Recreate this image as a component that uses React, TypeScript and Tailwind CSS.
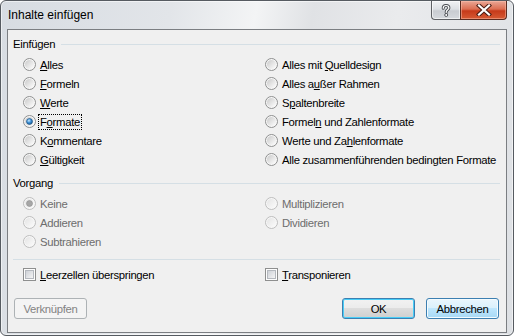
import React, { useId } from 'react';

// Windows 7 style "Inhalte einfügen" (Paste Special) dialog

const ui = "font-['Liberation_Sans',Arial,sans-serif]";

function Radio({ checked = false, disabled = false }: { checked?: boolean; disabled?: boolean }) {
  const id = useId().replace(/:/g, '');
  return (
    <svg width="13" height="13" viewBox="0 0 13 13" className="shrink-0">
      <defs>
        <linearGradient id={`f${id}`} x1="0" y1="0" x2="1" y2="1">
          <stop offset="0" stopColor={disabled ? '#e4e4e4' : '#c9c9c9'} />
          <stop offset="1" stopColor={disabled ? '#fbfbfb' : '#ffffff'} />
        </linearGradient>
        <radialGradient id={`d${id}`} cx="0.4" cy="0.35" r="0.75">
          <stop offset="0" stopColor="#c9e7fc" />
          <stop offset="0.45" stopColor="#3d92d8" />
          <stop offset="1" stopColor="#10497e" />
        </radialGradient>
      </defs>
      <circle cx="6.5" cy="6.5" r="6" fill="#f7f7f7" stroke={disabled ? '#bdbdbd' : '#8e8f8f'} />
      <circle cx="6.5" cy="6.5" r="4.6" fill={`url(#f${id})`} />
      {checked && (
        <circle cx="6.5" cy="6.5" r="3" fill={disabled ? '#a6a6a6' : `url(#d${id})`} stroke={disabled ? '#8d8d8d' : '#1a4f80'} strokeWidth="0.6" />
      )}
    </svg>
  );
}

function Checkbox() {
  const id = useId().replace(/:/g, '');
  return (
    <svg width="13" height="13" viewBox="0 0 13 13" className="shrink-0">
      <defs>
        <linearGradient id={`c${id}`} x1="0" y1="0" x2="1" y2="1">
          <stop offset="0" stopColor="#cbcfd5" />
          <stop offset="1" stopColor="#f7f7f7" />
        </linearGradient>
      </defs>
      <rect x="0.5" y="0.5" width="12" height="12" fill="#fdfdfd" stroke="#8e8f8f" />
      <rect x="2.5" y="2.5" width="8" height="8" fill={`url(#c${id})`} stroke="#b4b8be" />
    </svg>
  );
}

function Option({
  label,
  checked,
  disabled,
  focused,
  box,
}: {
  label: React.ReactNode;
  checked?: boolean;
  disabled?: boolean;
  focused?: boolean;
  box?: boolean;
}) {
  return (
    <div className="flex items-center h-[19px] gap-[2px]">
      {box ? <Checkbox /> : <Radio checked={checked} disabled={disabled} />}
      <span
        className={`px-[1px] border leading-[14px] whitespace-nowrap ${
          focused ? 'border-dotted border-black' : 'border-transparent'
        } ${disabled ? 'text-[#6d6d6d]' : 'text-black'}`}
      >
        {label}
      </span>
    </div>
  );
}

function GroupHeader({ title }: { title: string }) {
  return (
    <div className="flex items-center h-[14px] pl-[5px] pr-[6px]">
      <span className="text-black leading-[14px]">{title}</span>
      <div className="flex-1 h-px bg-[#d5dfe5] ml-[6px]" />
    </div>
  );
}

function Button({ children, kind }: { children: React.ReactNode; kind?: 'default' | 'hover' | 'disabled' }) {
  const styles = {
    normal:
      'border-[#707070] bg-[linear-gradient(#f2f2f2_0%,#ebebeb_50%,#dddddd_50%,#cfcfcf_100%)] shadow-[inset_0_0_0_1px_#fcfcfc] text-black',
    default:
      'border-[#3c7fb1] bg-[linear-gradient(#f2f2f2_0%,#ebebeb_50%,#dddddd_50%,#cfcfcf_100%)] shadow-[inset_0_0_0_1px_#48cdf7] text-black',
    hover:
      'border-[#3c7fb1] bg-[linear-gradient(#eaf6fd_0%,#d9f0fc_50%,#bee6fd_50%,#a7d9f5_100%)] shadow-[inset_0_0_0_1px_#f4fbfe] text-black',
    disabled: 'border-[#adb2b5] bg-[#f4f4f4] text-[#838383]',
  };
  return (
    <div
      className={`w-[73px] h-[21px] rounded-[3px] border flex items-center justify-center leading-[14px] ${
        styles[kind ?? 'normal']
      }`}
    >
      {children}
    </div>
  );
}

function HelpIcon() {
  return (
    <svg width="12" height="13" viewBox="0 0 12 13">
      <path
        d="M3.2 4.3 C3.2 2.4 4.4 1.5 6 1.5 C7.7 1.5 8.9 2.5 8.9 4 C8.9 5.6 6.2 6 6.2 7.9 L6.2 8.6"
        fill="none"
        stroke="#4a4d52"
        strokeWidth="3"
        strokeLinecap="round"
      />
      <path
        d="M3.2 4.3 C3.2 2.4 4.4 1.5 6 1.5 C7.7 1.5 8.9 2.5 8.9 4 C8.9 5.6 6.2 6 6.2 7.9 L6.2 8.6"
        fill="none"
        stroke="#ffffff"
        strokeWidth="1.2"
        strokeLinecap="round"
      />
      <circle cx="6.2" cy="11" r="1.5" fill="#ffffff" stroke="#4a4d52" strokeWidth="0.9" />
    </svg>
  );
}

function CloseIcon() {
  return (
    <svg width="16" height="12" viewBox="0 0 16 12">
      <path d="M3 1.5 L13 10.5 M13 1.5 L3 10.5" stroke="#4b1d14" strokeWidth="4.2" strokeLinecap="square" />
      <path d="M3 1.5 L13 10.5 M13 1.5 L3 10.5" stroke="#ffffff" strokeWidth="2.2" strokeLinecap="square" />
    </svg>
  );
}

const leftOptions: { label: React.ReactNode; checked?: boolean; focused?: boolean }[] = [
  { label: <><u>A</u>lles</> },
  { label: <><u>F</u>ormeln</> },
  { label: <><u>W</u>erte</> },
  { label: <>F<u>o</u>rmate</>, checked: true, focused: true },
  { label: <>K<u>o</u>mmentare</> },
  { label: <><u>G</u>ültigkeit</> },
];

const rightOptions: React.ReactNode[] = [
  <>Alles mit <u>Q</u>uelldesign</>,
  <>Alles a<u>u</u>ßer Rahmen</>,
  <>S<u>p</u>altenbreite</>,
  <>Formel<u>n</u> und Zahlenformate</>,
  <>Werte und Za<u>h</u>lenformate</>,
  <>Alle zusammenführenden bedin<u>g</u>ten Formate</>,
];

export default function App() {
  return (
    <div
      className={`w-[514px] h-[336px] flex flex-col rounded-[6px] border border-[#565b61] overflow-hidden text-[12px] bg-[linear-gradient(100deg,#d7dce2_0%,#e2e5e9_30%,#f3f4f5_45%,#e0e2e5_55%,#eaebed_70%,#dde0e4_100%)] shadow-[inset_0_0_0_1px_rgba(255,255,255,0.55)] ${ui}`}
    >
      {/* Title bar */}
      <div className="h-[28px] flex items-start shrink-0">
        <div className="h-[28px] flex items-center pl-[7px] flex-1 text-black">Inhalte einfügen</div>
        <div className="flex mr-[6px]">
          <div className="w-[29px] h-[19px] flex items-center justify-center rounded-bl-[4px] border border-t-0 border-r-0 border-[#5e6064] bg-[linear-gradient(#f1f2f4_0%,#dde0e4_45%,#c9ccd1_55%,#d6d9dd_100%)] shadow-[inset_0_0_0_1px_rgba(255,255,255,0.6)]">
            <HelpIcon />
          </div>
          <div className="w-[47px] h-[19px] flex items-center justify-center rounded-br-[4px] border border-t-0 border-[#5b2b20] bg-[linear-gradient(#eaa796_0%,#dc6e52_45%,#c63a1a_55%,#d65a34_100%)] shadow-[inset_0_0_0_1px_rgba(255,200,180,0.45)]">
            <CloseIcon />
          </div>
        </div>
      </div>

      {/* Client area */}
      <div className="flex-1 mx-[6px] mb-[2px] border border-[#7b7e82] bg-[#f0f0f0] flex flex-col pt-[7px] text-[11.3px] tracking-[-0.3px]">
        <GroupHeader title="Einfügen" />
        <div className="grid grid-cols-[242px_1fr] pl-[15px] mt-[4px]">
          <div className="flex flex-col">
            {leftOptions.map((o, i) => (
              <Option key={i} label={o.label} checked={o.checked} focused={o.focused} />
            ))}
          </div>
          <div className="flex flex-col">
            {rightOptions.map((l, i) => (
              <Option key={i} label={l} />
            ))}
          </div>
        </div>

        <div className="mt-[7px]">
          <GroupHeader title="Vorgang" />
        </div>
        <div className="grid grid-cols-[242px_1fr] pl-[15px] mt-[4px]">
          <div className="flex flex-col">
            <Option label="Keine" checked disabled />
            <Option label="Addieren" disabled />
            <Option label="Subtrahieren" disabled />
          </div>
          <div className="flex flex-col">
            <Option label="Multiplizieren" disabled />
            <Option label="Dividieren" disabled />
          </div>
        </div>

        <div className="h-px bg-[#d5dfe5] mt-[8px] ml-[5px] mr-[6px]" />

        <div className="grid grid-cols-[242px_1fr] pl-[15px] mt-[5px]">
          <Option box label={<><u>L</u>eerzellen überspringen</>} />
          <Option box label={<><u>T</u>ransponieren</>} />
        </div>

        <div className="flex items-center mt-[14px] pl-[6px] pr-[7px]">
          <Button kind="disabled">Verknüpfen</Button>
          <div className="flex-1" />
          <Button kind="default">OK</Button>
          <div className="w-[11px]" />
          <Button kind="hover">Abbrechen</Button>
        </div>
      </div>
    </div>
  );
}
